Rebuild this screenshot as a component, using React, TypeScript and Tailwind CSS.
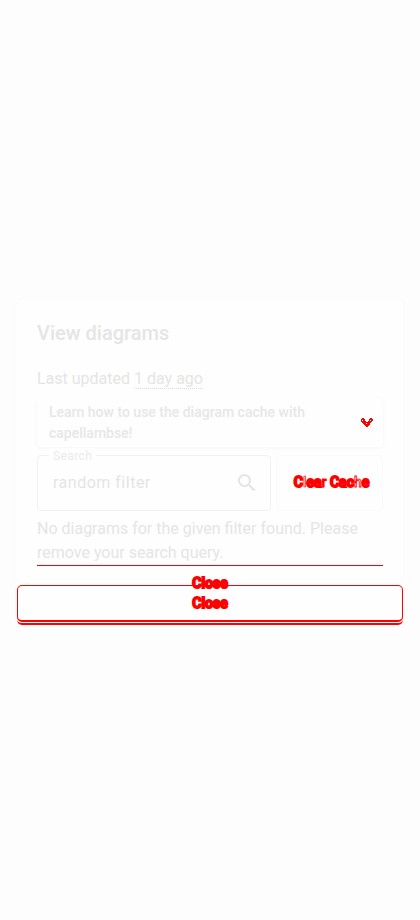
import React from "react";

function Chevron() {
  return (
    <svg className="h-[10px] w-3" viewBox="0 0 12 10" shapeRendering="crispEdges">
      <path fill="#ff0000" d="M1 0h2v1h1v2h1v1h2v-1h1v-2h1v-1h2v1h1v2h-1v1h-1v1h-1v2h-1v1h-1v1h-2v-1h-1v-1h-1v-1h-1v-1h-1v-1h-1v-3h1z" />
      <path fill="#ffffff" d="M1 2h1v1h-1zM5 5h1v1h-1zM9 2h1v1h-1z" />
    </svg>
  );
}

function SearchIcon() {
  return (
    <svg className="h-6 w-6" viewBox="0 0 24 24" fill="#e4e4e4">
      <path d="M15.5 14h-.79l-.28-.27A6.47 6.47 0 0 0 16 9.5 6.5 6.5 0 1 0 9.5 16c1.61 0 3.09-.59 4.23-1.57l.27.28v.79l5 4.99L20.49 19l-4.99-5zm-6 0C7.01 14 5 11.99 5 9.5S7.01 5 9.5 5 14 7.01 14 9.5 11.99 14 9.5 14z" />
    </svg>
  );
}

export default function App() {
  return (
    <div className="h-[920px] w-[420px] overflow-hidden bg-[#fdfdfd] px-[17px] pt-[299px] font-['Roboto',sans-serif] text-[#e5e5e5]">
      <div className="h-[325px] rounded-[6px] bg-[#fefefe] px-5 pt-5 shadow-[0_0_3px_#f8f8f8]">
        <h1 className="h-7 text-[20px] leading-7 font-medium">View diagrams</h1>
        <p className="mt-5 h-6 text-base leading-6">
          Last updated <span className="inline-block h-[22px] border-b border-dotted border-[#dadada]">1 day ago</span>
        </p>
        <div className="mt-[7px] flex h-[49px] items-center justify-between rounded bg-[#fefefe] pr-[10px] pl-3 shadow-[0_1px_4px_#f5f5f5]">
          <p className="w-[280px] text-[14px] leading-[21px] font-medium text-[#e7e7e7]">
            Learn how to use the diagram cache with capellambse!
          </p>
          <Chevron />
        </div>
        <div className="mt-2 flex gap-[5px]">
          <div className="relative flex h-14 w-[234px] items-center justify-between rounded border border-[#f1f1f1] pr-[11px] pl-[15px]">
            <span className="absolute -top-[8px] left-[11px] bg-[#fefefe] px-1 text-[12px] leading-4 tracking-[0.4px] text-[#ebebeb]">Search</span>
            <span className="text-base leading-6 tracking-[0.5px]">random filter</span>
            <SearchIcon />
          </div>
          <div className="flex h-14 w-[107px] items-center justify-center rounded border border-[#fafafa] pr-px pb-px pl-[5px] text-[14px] font-medium whitespace-nowrap text-[#ff0000] [-webkit-text-stroke:2px_#ff0000]">
            <span>
              C<span className="text-[#eeeeee] [-webkit-text-stroke:0.7px_#ff0000]">l</span>ea<span className="[-webkit-text-stroke:1px_#ff0000]">r</span> Cac<span className="text-[#eeeeee] [-webkit-text-stroke:0.8px_#ff0000]">h</span>e
            </span>
          </div>
        </div>
        <p className="mt-[6px] h-12 text-base leading-6">
          No diagrams for the given filter found. Please remove your search query.
        </p>
        <div className="h-px bg-[#ff0000]" />
        <div className="relative -mx-5 mt-[19px] flex h-[37px] justify-center rounded-[5px] border border-b-2 border-[#ff0000] text-[14px] leading-4 font-medium text-[#ff0000] [-webkit-text-stroke:2px_#ff0000]">
          <div className="absolute -inset-x-px -bottom-[5px] h-[7px] rounded-b-[5px] border-b-2 border-[#ff0000]" />
          <span className="absolute -top-[11px]">Close</span>
          <span className="mt-[9px]">Close</span>
        </div>
      </div>
    </div>
  );
}
